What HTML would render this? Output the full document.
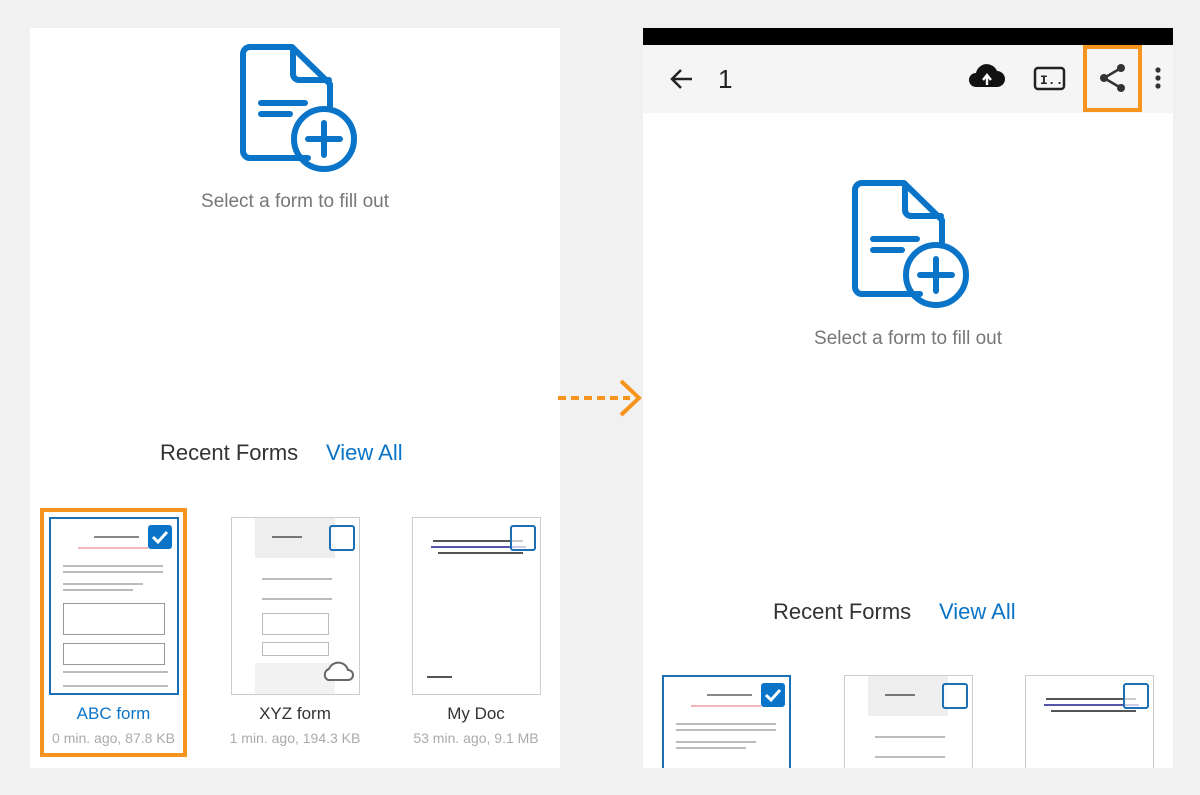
<!DOCTYPE html>
<html><head><meta charset="utf-8"><style>
body{margin:0;width:1200px;height:795px;background:#f1f1f1;position:relative;overflow:hidden;font-family:"Liberation Sans",Roboto,sans-serif}
.a{position:absolute}
.panel{background:#fff}
.t{position:absolute;text-align:center;white-space:nowrap}
.card{position:absolute;background:#fff;border:1px solid #ccc;box-sizing:border-box;overflow:hidden}
.ln{position:absolute;height:2px;background:#bbb}
.cb{position:absolute;width:22px;height:22px;border:2px solid #1a6fb5;border-radius:3px;background:rgba(255,255,255,.7)}
.cbk{position:absolute;width:24px;height:24px;background:#0a74c8;border-radius:3px}
</style></head><body>
<div class="a panel" style="left:30px;top:28px;width:530px;height:740px"></div>
<div class="a" style="left:643px;top:28px;width:530px;height:17px;background:#000"></div>
<div class="a" style="left:643px;top:45px;width:530px;height:68px;background:#f5f5f5"></div>
<div class="a panel" style="left:643px;top:113px;width:530px;height:655px"></div>

<svg class="a" style="left:0;top:0" width="1200" height="795">
<g id="ic" fill="none" stroke="#0a74c8" stroke-width="6" stroke-linecap="round" stroke-linejoin="round">
<path d="M308 158 H250 a7 7 0 0 1 -7 -7 V54 a7 7 0 0 1 7 -7 H292 L330 84 V106"/>
<path d="M293 48 V74 a6 6 0 0 0 6 6 H329"/>
<path d="M261 103 H305 M261 114 H290"/>
<circle cx="324" cy="139" r="30"/>
<path d="M324 123 V155 M308 139 H340"/>
</g>
<use href="#ic" transform="translate(612,136)"/>
<g stroke="#f7941d" stroke-width="4" fill="none">
<path d="M558 398 H630" stroke-dasharray="8 5"/>
<path d="M621 381 L639 398 L621 415"/>
</g>
<rect x="42" y="510" width="143" height="245" fill="none" stroke="#f7941d" stroke-width="4"/>
<rect x="1085" y="47" width="55" height="63" fill="none" stroke="#f7941d" stroke-width="4"/>
<!-- toolbar icons -->
<path d="M692 79 H672 M681 70 L672 79 L681 88" stroke="#222" stroke-width="2.5" fill="none"/>
<path d="M976 87 a7 7 0 0 1 0 -14 a11 11 0 0 1 21 -2 a8 8 0 0 1 0 16 Z" fill="#111"/>
<path d="M987 85 V76 M983 80 L987 75 L991 80" stroke="#fff" stroke-width="2.4" fill="none"/>
<rect x="1035" y="68" width="29" height="21" rx="3" fill="none" stroke="#222" stroke-width="2.5"/>
<text x="1040" y="84" font-size="13" font-weight="bold" font-family="Liberation Mono" fill="#222">I..</text>
<g fill="#333"><circle cx="1121" cy="68" r="4"/><circle cx="1104" cy="78" r="4"/><circle cx="1121" cy="88" r="4"/></g>
<path d="M1121 68 L1104 78 L1121 88" stroke="#333" stroke-width="2.5" fill="none"/>
<g fill="#333"><circle cx="1158" cy="70" r="2.6"/><circle cx="1158" cy="78" r="2.6"/><circle cx="1158" cy="86" r="2.6"/></g>
</svg>
<div class="t" style="left:718px;top:64px;font-size:26px;color:#222">1</div>

<div class="t" style="left:130px;width:330px;top:191px;font-size:19px;color:#777">Select a form to fill out</div>
<div class="t" style="left:743px;width:330px;top:328px;font-size:19px;color:#777">Select a form to fill out</div>
<div class="t" style="left:160px;top:440px;font-size:22px;color:#333">Recent Forms</div>
<div class="t" style="left:326px;top:440px;font-size:22px;color:#0a74c8">View All</div>
<div class="t" style="left:773px;top:599px;font-size:22px;color:#333">Recent Forms</div>
<div class="t" style="left:939px;top:599px;font-size:22px;color:#0a74c8">View All</div>

<!-- left cards -->
<div class="card" style="left:49px;top:517px;width:130px;height:178px;border:2px solid #1a6fb5">
<div class="ln" style="left:43px;top:17px;width:45px;background:#888"></div>
<div class="ln" style="left:27px;top:28px;width:70px;background:#f3b5b5"></div>
<div class="ln" style="left:12px;top:46px;width:100px"></div><div class="ln" style="left:12px;top:52px;width:100px"></div>
<div class="ln" style="left:12px;top:64px;width:80px"></div><div class="ln" style="left:12px;top:70px;width:70px"></div>
<div class="a" style="left:12px;top:84px;width:100px;height:30px;border:1px solid #999"></div>
<div class="a" style="left:12px;top:124px;width:100px;height:20px;border:1px solid #999"></div>
<div class="ln" style="left:12px;top:152px;width:105px"></div>
<div class="ln" style="left:12px;top:166px;width:105px"></div>
<div class="cbk" style="left:97px;top:6px"><svg width="24" height="24"><path d="M5 12 L10 17 L19 7" stroke="#fff" stroke-width="3" fill="none"/></svg></div>
</div>
<div class="card" style="left:231px;top:517px;width:129px;height:178px">
<div class="a" style="left:23px;top:0;width:80px;height:40px;background:#eee"></div>
<div class="ln" style="left:40px;top:18px;width:30px;background:#777"></div>
<div class="ln" style="left:30px;top:60px;width:70px"></div><div class="ln" style="left:30px;top:80px;width:70px"></div>
<div class="a" style="left:30px;top:95px;width:65px;height:20px;border:1px solid #bbb"></div>
<div class="a" style="left:30px;top:124px;width:65px;height:12px;border:1px solid #bbb"></div>
<div class="a" style="left:23px;top:145px;width:80px;height:33px;background:#f2f2f2"></div>
<div class="cb" style="left:97px;top:7px"></div>
<svg class="a" style="left:88px;top:140px" width="36" height="26"><path d="M8 22 a6 6 0 0 1 1 -11 a10 10 0 0 1 19 1 a5 5 0 0 1 0 10 Z" fill="#fff" stroke="#666" stroke-width="2"/></svg>
</div>
<div class="card" style="left:412px;top:517px;width:129px;height:178px">
<div class="ln" style="left:20px;top:22px;width:90px;background:#555"></div>
<div class="ln" style="left:18px;top:28px;width:95px;background:#55a"></div>
<div class="ln" style="left:25px;top:34px;width:85px;background:#555"></div>
<div class="ln" style="left:14px;top:158px;width:25px;background:#555"></div>
<div class="cb" style="left:97px;top:7px"></div>
</div>
<div class="t" style="left:40px;width:147px;top:704px;font-size:17px;color:#0a74c8">ABC form</div>
<div class="t" style="left:40px;width:147px;top:730px;font-size:14px;color:#aaa">0 min. ago, 87.8 KB</div>
<div class="t" style="left:210px;width:170px;top:704px;font-size:17px;color:#333">XYZ form</div>
<div class="t" style="left:210px;width:170px;top:730px;font-size:14px;color:#aaa">1 min. ago, 194.3 KB</div>
<div class="t" style="left:391px;width:170px;top:704px;font-size:17px;color:#333">My Doc</div>
<div class="t" style="left:391px;width:170px;top:730px;font-size:14px;color:#aaa">53 min. ago, 9.1 MB</div>

<!-- right cards -->
<div class="card" style="left:662px;top:675px;width:129px;height:93px;border:2px solid #1a6fb5;border-bottom:none">
<div class="ln" style="left:43px;top:17px;width:45px;background:#888"></div>
<div class="ln" style="left:27px;top:28px;width:70px;background:#f3b5b5"></div>
<div class="ln" style="left:12px;top:46px;width:100px"></div><div class="ln" style="left:12px;top:52px;width:100px"></div>
<div class="ln" style="left:12px;top:64px;width:80px"></div><div class="ln" style="left:12px;top:70px;width:70px"></div>
<div class="cbk" style="left:97px;top:6px"><svg width="24" height="24"><path d="M5 12 L10 17 L19 7" stroke="#fff" stroke-width="3" fill="none"/></svg></div>
</div>
<div class="card" style="left:844px;top:675px;width:129px;height:93px;border-bottom:none">
<div class="a" style="left:23px;top:0;width:80px;height:40px;background:#eee"></div>
<div class="ln" style="left:40px;top:18px;width:30px;background:#777"></div>
<div class="ln" style="left:30px;top:60px;width:70px"></div><div class="ln" style="left:30px;top:80px;width:70px"></div>
<div class="cb" style="left:97px;top:7px"></div>
</div>
<div class="card" style="left:1025px;top:675px;width:129px;height:93px;border-bottom:none">
<div class="ln" style="left:20px;top:22px;width:90px;background:#555"></div>
<div class="ln" style="left:18px;top:28px;width:95px;background:#55a"></div>
<div class="ln" style="left:25px;top:34px;width:85px;background:#555"></div>
<div class="cb" style="left:97px;top:7px"></div>
</div>
</body></html>
